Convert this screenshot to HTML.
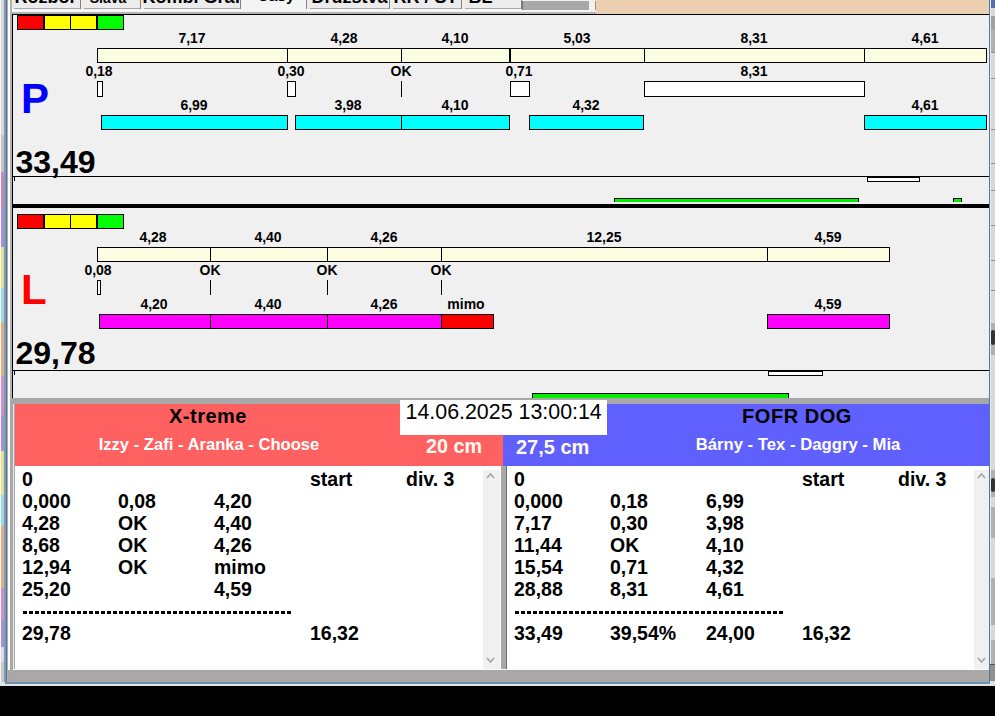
<!DOCTYPE html>
<html><head><meta charset="utf-8"><style>
html,body{margin:0;padding:0;width:995px;height:716px;overflow:hidden;background:#f0f0f0;}
.a{position:absolute;box-sizing:border-box;font-family:"Liberation Sans", sans-serif;}
</style></head><body>
<div class="a" style="left:0px;top:0px;width:995px;height:716px;background:#f0f0f0;"></div>
<div class="a" style="left:1px;top:0px;width:3px;height:135px;background:#d8d8d8;"></div>
<div class="a" style="left:1px;top:135px;width:3px;height:37px;background:#c4c4c4;"></div>
<div class="a" style="left:1px;top:172px;width:3px;height:36px;background:#c888b8;"></div>
<div class="a" style="left:1px;top:208px;width:3px;height:39px;background:#a890d8;"></div>
<div class="a" style="left:1px;top:247px;width:3px;height:41px;background:#e6e090;"></div>
<div class="a" style="left:1px;top:288px;width:3px;height:34px;background:#a0d8e0;"></div>
<div class="a" style="left:1px;top:322px;width:3px;height:54px;background:#e0b080;"></div>
<div class="a" style="left:1px;top:376px;width:3px;height:39px;background:#d090c8;"></div>
<div class="a" style="left:1px;top:415px;width:3px;height:36px;background:#a890d8;"></div>
<div class="a" style="left:1px;top:451px;width:3px;height:44px;background:#e6e090;"></div>
<div class="a" style="left:1px;top:495px;width:3px;height:31px;background:#a0d8e0;"></div>
<div class="a" style="left:1px;top:526px;width:3px;height:62px;background:#e0b080;"></div>
<div class="a" style="left:1px;top:588px;width:3px;height:33px;background:#d090c8;"></div>
<div class="a" style="left:1px;top:621px;width:3px;height:26px;background:#a890d8;"></div>
<div class="a" style="left:1px;top:647px;width:3px;height:15px;background:#e0d8e8;"></div>
<div class="a" style="left:1px;top:662px;width:3px;height:24px;background:#c8c8c8;"></div>
<div class="a" style="left:0px;top:0px;width:1px;height:686px;background:#f4f8f8;"></div>
<div class="a" style="left:4px;top:0px;width:2px;height:686px;background:#7a9cb8;"></div>
<div class="a" style="left:6px;top:0px;width:1px;height:686px;background:#607080;"></div>
<div class="a" style="left:7px;top:0px;width:1px;height:686px;background:#b0b0b0;"></div>
<div class="a" style="left:8px;top:0px;width:2px;height:686px;background:#ffffff;"></div>
<div class="a" style="left:10px;top:0px;width:2px;height:686px;background:#b0b4b8;"></div>
<div class="a" style="left:12px;top:0px;width:977px;height:14px;background:#f0f0f0;"></div>
<div class="a" style="left:12px;top:0px;width:69px;height:9px;background:#ececec;"></div>
<div class="a" style="left:14px;top:8px;width:66px;height:1px;background:#a8a8a8;"></div>
<div class="a" style="left:80px;top:0px;width:1px;height:9px;background:#808080;"></div>
<div class="a" style="left:-154.5px;width:400px;text-align:center;top:-11.74px;font-size:18px;line-height:18px;font-weight:bold;color:#000;white-space:pre;">Rozbor</div>
<div class="a" style="left:82px;top:0px;width:59px;height:9px;background:#ececec;"></div>
<div class="a" style="left:84px;top:8px;width:56px;height:1px;background:#a8a8a8;"></div>
<div class="a" style="left:140px;top:0px;width:1px;height:9px;background:#808080;"></div>
<div class="a" style="left:-92px;width:400px;text-align:center;top:-9.05px;font-size:14px;line-height:14px;font-weight:bold;color:#000;white-space:pre;">Sláva</div>
<div class="a" style="left:142px;top:0px;width:99px;height:9px;background:#ececec;"></div>
<div class="a" style="left:144px;top:8px;width:96px;height:1px;background:#a8a8a8;"></div>
<div class="a" style="left:240px;top:0px;width:1px;height:9px;background:#808080;"></div>
<div class="a" style="left:-8.5px;width:400px;text-align:center;top:-11.74px;font-size:18px;line-height:18px;font-weight:bold;color:#000;white-space:pre;">Kombi Graf</div>
<div class="a" style="left:241px;top:0px;width:66px;height:12px;background:#f4f4f4;"></div>
<div class="a" style="left:306px;top:0px;width:1px;height:9px;background:#808080;"></div>
<div class="a" style="left:76px;width:400px;text-align:center;top:-11.62px;font-size:15.5px;line-height:15.5px;font-weight:bold;color:#000;white-space:pre;">Časy</div>
<div class="a" style="left:308px;top:0px;width:82px;height:9px;background:#ececec;"></div>
<div class="a" style="left:310px;top:8px;width:79px;height:1px;background:#a8a8a8;"></div>
<div class="a" style="left:389px;top:0px;width:1px;height:9px;background:#808080;"></div>
<div class="a" style="left:149.5px;width:400px;text-align:center;top:-11.74px;font-size:18px;line-height:18px;font-weight:bold;color:#000;white-space:pre;">Družstva</div>
<div class="a" style="left:391px;top:0px;width:71px;height:9px;background:#ececec;"></div>
<div class="a" style="left:393px;top:8px;width:68px;height:1px;background:#a8a8a8;"></div>
<div class="a" style="left:461px;top:0px;width:1px;height:9px;background:#808080;"></div>
<div class="a" style="left:225.5px;width:400px;text-align:center;top:-11.74px;font-size:18px;line-height:18px;font-weight:bold;color:#000;white-space:pre;">RR / ST</div>
<div class="a" style="left:463px;top:0px;width:59px;height:9px;background:#ececec;"></div>
<div class="a" style="left:465px;top:8px;width:56px;height:1px;background:#a8a8a8;"></div>
<div class="a" style="left:521px;top:0px;width:1px;height:9px;background:#808080;"></div>
<div class="a" style="left:280.5px;width:400px;text-align:center;top:-11.74px;font-size:18px;line-height:18px;font-weight:bold;color:#000;white-space:pre;">BL</div>
<div class="a" style="left:12px;top:9px;width:977px;height:3px;background:#f6f6f6;"></div>
<div class="a" style="left:12px;top:12px;width:977px;height:2px;background:#b4b4b4;"></div>
<div class="a" style="left:522px;top:1px;width:67px;height:9px;background:#a8a8a8;"></div>
<div class="a" style="left:522px;top:1px;width:1px;height:9px;background:#707070;"></div>
<div class="a" style="left:589px;top:0px;width:6px;height:12px;background:#f8f0e8;"></div>
<div class="a" style="left:595px;top:1px;width:1px;height:9px;background:#909090;"></div>
<div class="a" style="left:596px;top:0px;width:393px;height:14px;background:#eccfb0;"></div>
<div class="a" style="left:989px;top:0px;width:1px;height:684px;background:#4a78a8;"></div>
<div class="a" style="left:991px;top:0px;width:4px;height:686px;background:#d8d8d8;"></div>
<div class="a" style="left:990px;top:0px;width:1px;height:686px;background:#e8eef4;"></div>
<div class="a" style="left:991px;top:0px;width:4px;height:8px;background:#5070b0;"></div>
<div class="a" style="left:991px;top:16px;width:4px;height:14px;background:#a0a0a0;"></div>
<div class="a" style="left:991px;top:30px;width:4px;height:22px;background:#b0b0b0;"></div>
<div class="a" style="left:991px;top:323px;width:4px;height:32px;background:#b0b0b0;"></div>
<div class="a" style="left:991px;top:470px;width:4px;height:27px;background:#b0b0b0;"></div>
<div class="a" style="left:991px;top:507px;width:4px;height:31px;background:#b0b0b0;"></div>
<div class="a" style="left:991px;top:578px;width:4px;height:47px;background:#b0b0b0;"></div>
<div class="a" style="left:991px;top:640px;width:4px;height:24px;background:#b0b0b0;"></div>
<div class="a" style="left:991px;top:52px;width:4px;height:1px;background:#909090;"></div>
<div class="a" style="left:991px;top:78px;width:4px;height:1px;background:#909090;"></div>
<div class="a" style="left:991px;top:129px;width:4px;height:1px;background:#909090;"></div>
<div class="a" style="left:991px;top:163px;width:4px;height:1px;background:#909090;"></div>
<div class="a" style="left:991px;top:190px;width:4px;height:1px;background:#909090;"></div>
<div class="a" style="left:991px;top:225px;width:4px;height:1px;background:#909090;"></div>
<div class="a" style="left:991px;top:260px;width:4px;height:1px;background:#909090;"></div>
<div class="a" style="left:991px;top:290px;width:4px;height:1px;background:#909090;"></div>
<div class="a" style="left:991px;top:330px;width:4px;height:15px;background:#333;border-radius:2px;"></div>
<div class="a" style="left:991px;top:478px;width:4px;height:14px;background:#333;border-radius:2px;"></div>
<div class="a" style="left:12px;top:14px;width:977px;height:1px;background:#000;"></div>
<div class="a" style="left:12px;top:14px;width:1px;height:384px;background:#000;"></div>
<div class="a" style="left:17px;top:15px;width:107px;height:15px;background:#000;"></div>
<div class="a" style="left:18px;top:16px;width:25px;height:13px;background:#ff0000;"></div>
<div class="a" style="left:45px;top:16px;width:25px;height:13px;background:#ffff00;"></div>
<div class="a" style="left:71px;top:16px;width:25px;height:13px;background:#ffff00;"></div>
<div class="a" style="left:98px;top:16px;width:25px;height:13px;background:#00ff00;"></div>
<div class="a" style="left:97px;top:48px;width:890px;height:15px;background:#fdfde2;border:1px solid #000;"></div>
<div class="a" style="left:287px;top:48px;width:1px;height:15px;background:#000;"></div>
<div class="a" style="left:401px;top:48px;width:1px;height:15px;background:#000;"></div>
<div class="a" style="left:644px;top:48px;width:1px;height:15px;background:#000;"></div>
<div class="a" style="left:864px;top:48px;width:1px;height:15px;background:#000;"></div>
<div class="a" style="left:509px;top:48px;width:2px;height:15px;background:#000;"></div>
<div class="a" style="left:-8px;width:400px;text-align:center;top:31.15px;font-size:14px;line-height:14px;font-weight:bold;color:#000;white-space:pre;transform:scaleY(1.08);transform-origin:0 11.85px;">7,17</div>
<div class="a" style="left:144px;width:400px;text-align:center;top:31.15px;font-size:14px;line-height:14px;font-weight:bold;color:#000;white-space:pre;transform:scaleY(1.08);transform-origin:0 11.85px;">4,28</div>
<div class="a" style="left:255px;width:400px;text-align:center;top:31.15px;font-size:14px;line-height:14px;font-weight:bold;color:#000;white-space:pre;transform:scaleY(1.08);transform-origin:0 11.85px;">4,10</div>
<div class="a" style="left:377px;width:400px;text-align:center;top:31.15px;font-size:14px;line-height:14px;font-weight:bold;color:#000;white-space:pre;transform:scaleY(1.08);transform-origin:0 11.85px;">5,03</div>
<div class="a" style="left:554px;width:400px;text-align:center;top:31.15px;font-size:14px;line-height:14px;font-weight:bold;color:#000;white-space:pre;transform:scaleY(1.08);transform-origin:0 11.85px;">8,31</div>
<div class="a" style="left:725px;width:400px;text-align:center;top:31.15px;font-size:14px;line-height:14px;font-weight:bold;color:#000;white-space:pre;transform:scaleY(1.08);transform-origin:0 11.85px;">4,61</div>
<div class="a" style="left:-101px;width:400px;text-align:center;top:64.15px;font-size:14px;line-height:14px;font-weight:bold;color:#000;white-space:pre;transform:scaleY(1.08);transform-origin:0 11.85px;">0,18</div>
<div class="a" style="left:91px;width:400px;text-align:center;top:64.15px;font-size:14px;line-height:14px;font-weight:bold;color:#000;white-space:pre;transform:scaleY(1.08);transform-origin:0 11.85px;">0,30</div>
<div class="a" style="left:201px;width:400px;text-align:center;top:64.15px;font-size:14px;line-height:14px;font-weight:bold;color:#000;white-space:pre;transform:scaleY(1.08);transform-origin:0 11.85px;">OK</div>
<div class="a" style="left:319px;width:400px;text-align:center;top:64.15px;font-size:14px;line-height:14px;font-weight:bold;color:#000;white-space:pre;transform:scaleY(1.08);transform-origin:0 11.85px;">0,71</div>
<div class="a" style="left:554px;width:400px;text-align:center;top:64.15px;font-size:14px;line-height:14px;font-weight:bold;color:#000;white-space:pre;transform:scaleY(1.08);transform-origin:0 11.85px;">8,31</div>
<div class="a" style="left:97px;top:81px;width:6px;height:16px;background:#fff;border:1px solid #000;"></div>
<div class="a" style="left:287px;top:81px;width:9px;height:16px;background:#fff;border:1px solid #000;"></div>
<div class="a" style="left:510px;top:81px;width:20px;height:16px;background:#fff;border:1px solid #000;"></div>
<div class="a" style="left:644px;top:81px;width:221px;height:16px;background:#fff;border:1px solid #000;"></div>
<div class="a" style="left:401px;top:81px;width:1px;height:16px;background:#000;"></div>
<div class="a" style="left:101px;top:115px;width:187px;height:15px;background:#00ffff;border:1px solid #000;"></div>
<div class="a" style="left:295px;top:115px;width:215px;height:15px;background:#00ffff;border:1px solid #000;"></div>
<div class="a" style="left:529px;top:115px;width:115px;height:15px;background:#00ffff;border:1px solid #000;"></div>
<div class="a" style="left:864px;top:115px;width:123px;height:15px;background:#00ffff;border:1px solid #000;"></div>
<div class="a" style="left:401px;top:115px;width:1px;height:15px;background:#000;"></div>
<div class="a" style="left:-6px;width:400px;text-align:center;top:98.15px;font-size:14px;line-height:14px;font-weight:bold;color:#000;white-space:pre;transform:scaleY(1.08);transform-origin:0 11.85px;">6,99</div>
<div class="a" style="left:148px;width:400px;text-align:center;top:98.15px;font-size:14px;line-height:14px;font-weight:bold;color:#000;white-space:pre;transform:scaleY(1.08);transform-origin:0 11.85px;">3,98</div>
<div class="a" style="left:255px;width:400px;text-align:center;top:98.15px;font-size:14px;line-height:14px;font-weight:bold;color:#000;white-space:pre;transform:scaleY(1.08);transform-origin:0 11.85px;">4,10</div>
<div class="a" style="left:386px;width:400px;text-align:center;top:98.15px;font-size:14px;line-height:14px;font-weight:bold;color:#000;white-space:pre;transform:scaleY(1.08);transform-origin:0 11.85px;">4,32</div>
<div class="a" style="left:725px;width:400px;text-align:center;top:98.15px;font-size:14px;line-height:14px;font-weight:bold;color:#000;white-space:pre;transform:scaleY(1.08);transform-origin:0 11.85px;">4,61</div>
<div class="a" style="left:21px;top:78.45px;font-size:42px;line-height:42px;font-weight:bold;color:#0000ff;white-space:pre;">P</div>
<div class="a" style="left:15.5px;top:146.11px;font-size:32px;line-height:32px;font-weight:bold;color:#000;white-space:pre;">33,49</div>
<div class="a" style="left:13px;top:176px;width:976px;height:1px;background:#000;"></div>
<div class="a" style="left:14px;top:177px;width:1px;height:4px;background:#000;"></div>
<div class="a" style="left:867px;top:176px;width:53px;height:6px;background:#fff;border:1px solid #000;border-top-width:2px;"></div>
<div class="a" style="left:614px;top:198px;width:245px;height:4px;background:#00f000;border:1px solid #000;border-bottom:0;"></div>
<div class="a" style="left:953px;top:198px;width:9px;height:4px;background:#00f000;border:1px solid #000;border-bottom:0;"></div>
<div class="a" style="left:13px;top:204px;width:976px;height:4px;background:#000;"></div>
<div class="a" style="left:17px;top:214px;width:107px;height:15px;background:#000;"></div>
<div class="a" style="left:18px;top:215px;width:25px;height:13px;background:#ff0000;"></div>
<div class="a" style="left:45px;top:215px;width:25px;height:13px;background:#ffff00;"></div>
<div class="a" style="left:71px;top:215px;width:25px;height:13px;background:#ffff00;"></div>
<div class="a" style="left:98px;top:215px;width:25px;height:13px;background:#00ff00;"></div>
<div class="a" style="left:97px;top:247px;width:793px;height:15px;background:#fdfde2;border:1px solid #000;"></div>
<div class="a" style="left:210px;top:247px;width:1px;height:15px;background:#000;"></div>
<div class="a" style="left:327px;top:247px;width:1px;height:15px;background:#000;"></div>
<div class="a" style="left:441px;top:247px;width:1px;height:15px;background:#000;"></div>
<div class="a" style="left:767px;top:247px;width:1px;height:15px;background:#000;"></div>
<div class="a" style="left:-47px;width:400px;text-align:center;top:230.15px;font-size:14px;line-height:14px;font-weight:bold;color:#000;white-space:pre;transform:scaleY(1.08);transform-origin:0 11.85px;">4,28</div>
<div class="a" style="left:68px;width:400px;text-align:center;top:230.15px;font-size:14px;line-height:14px;font-weight:bold;color:#000;white-space:pre;transform:scaleY(1.08);transform-origin:0 11.85px;">4,40</div>
<div class="a" style="left:184px;width:400px;text-align:center;top:230.15px;font-size:14px;line-height:14px;font-weight:bold;color:#000;white-space:pre;transform:scaleY(1.08);transform-origin:0 11.85px;">4,26</div>
<div class="a" style="left:404px;width:400px;text-align:center;top:230.15px;font-size:14px;line-height:14px;font-weight:bold;color:#000;white-space:pre;transform:scaleY(1.08);transform-origin:0 11.85px;">12,25</div>
<div class="a" style="left:628px;width:400px;text-align:center;top:230.15px;font-size:14px;line-height:14px;font-weight:bold;color:#000;white-space:pre;transform:scaleY(1.08);transform-origin:0 11.85px;">4,59</div>
<div class="a" style="left:-102px;width:400px;text-align:center;top:263.15px;font-size:14px;line-height:14px;font-weight:bold;color:#000;white-space:pre;transform:scaleY(1.08);transform-origin:0 11.85px;">0,08</div>
<div class="a" style="left:10px;width:400px;text-align:center;top:263.15px;font-size:14px;line-height:14px;font-weight:bold;color:#000;white-space:pre;transform:scaleY(1.08);transform-origin:0 11.85px;">OK</div>
<div class="a" style="left:127px;width:400px;text-align:center;top:263.15px;font-size:14px;line-height:14px;font-weight:bold;color:#000;white-space:pre;transform:scaleY(1.08);transform-origin:0 11.85px;">OK</div>
<div class="a" style="left:241px;width:400px;text-align:center;top:263.15px;font-size:14px;line-height:14px;font-weight:bold;color:#000;white-space:pre;transform:scaleY(1.08);transform-origin:0 11.85px;">OK</div>
<div class="a" style="left:97px;top:280px;width:4px;height:15px;background:#fff;border:1px solid #000;"></div>
<div class="a" style="left:210px;top:280px;width:1px;height:15px;background:#000;"></div>
<div class="a" style="left:327px;top:280px;width:1px;height:15px;background:#000;"></div>
<div class="a" style="left:441px;top:280px;width:1px;height:15px;background:#000;"></div>
<div class="a" style="left:99px;top:314px;width:343px;height:15px;background:#ff00ff;border:1px solid #000;"></div>
<div class="a" style="left:210px;top:314px;width:1px;height:15px;background:#000;"></div>
<div class="a" style="left:327px;top:314px;width:1px;height:15px;background:#000;"></div>
<div class="a" style="left:441px;top:314px;width:53px;height:15px;background:#ff0000;border:1px solid #000;"></div>
<div class="a" style="left:767px;top:314px;width:123px;height:15px;background:#ff00ff;border:1px solid #000;"></div>
<div class="a" style="left:-46px;width:400px;text-align:center;top:297.15px;font-size:14px;line-height:14px;font-weight:bold;color:#000;white-space:pre;transform:scaleY(1.08);transform-origin:0 11.85px;">4,20</div>
<div class="a" style="left:68px;width:400px;text-align:center;top:297.15px;font-size:14px;line-height:14px;font-weight:bold;color:#000;white-space:pre;transform:scaleY(1.08);transform-origin:0 11.85px;">4,40</div>
<div class="a" style="left:184px;width:400px;text-align:center;top:297.15px;font-size:14px;line-height:14px;font-weight:bold;color:#000;white-space:pre;transform:scaleY(1.08);transform-origin:0 11.85px;">4,26</div>
<div class="a" style="left:266px;width:400px;text-align:center;top:297.15px;font-size:14px;line-height:14px;font-weight:bold;color:#000;white-space:pre;transform:scaleY(1.08);transform-origin:0 11.85px;">mimo</div>
<div class="a" style="left:628px;width:400px;text-align:center;top:297.15px;font-size:14px;line-height:14px;font-weight:bold;color:#000;white-space:pre;transform:scaleY(1.08);transform-origin:0 11.85px;">4,59</div>
<div class="a" style="left:21px;top:269.45px;font-size:42px;line-height:42px;font-weight:bold;color:#ff0000;white-space:pre;">L</div>
<div class="a" style="left:15.5px;top:337.11px;font-size:32px;line-height:32px;font-weight:bold;color:#000;white-space:pre;">29,78</div>
<div class="a" style="left:13px;top:370px;width:976px;height:1px;background:#000;"></div>
<div class="a" style="left:14px;top:371px;width:1px;height:4px;background:#000;"></div>
<div class="a" style="left:768px;top:370px;width:55px;height:6px;background:#fff;border:1px solid #000;border-top-width:2px;"></div>
<div class="a" style="left:532px;top:393px;width:257px;height:5px;background:#00f000;border:1px solid #000;border-bottom:0;"></div>
<div class="a" style="left:12px;top:398px;width:977px;height:6px;background:#a8a8a8;"></div>
<div class="a" style="left:10px;top:398px;width:5px;height:272px;background:#a8a8a8;"></div>
<div class="a" style="left:13px;top:404px;width:1px;height:265px;background:#e8e8e8;"></div>
<div class="a" style="left:15px;top:404px;width:488px;height:62px;background:#ff6060;"></div>
<div class="a" style="left:503px;top:404px;width:486px;height:62px;background:#6060ff;"></div>
<div class="a" style="left:8px;width:400px;text-align:center;top:406.07px;font-size:20px;line-height:20px;font-weight:bold;color:#000;white-space:pre;letter-spacing:0.5px;">X-treme</div>
<div class="a" style="left:9px;width:400px;text-align:center;top:436.70px;font-size:16.6px;line-height:16.6px;font-weight:bold;color:#fff;white-space:pre;">Izzy - Zafi - Aranka - Choose</div>
<div class="a" style="left:82px;width:400px;text-align:right;top:437.24px;font-size:19.8px;line-height:19.8px;font-weight:bold;color:#fffaf4;white-space:pre;">20 cm</div>
<div class="a" style="left:516px;top:437.07px;font-size:20px;line-height:20px;font-weight:bold;color:#fffaf4;white-space:pre;">27,5 cm</div>
<div class="a" style="left:597px;width:400px;text-align:center;top:406.07px;font-size:20px;line-height:20px;font-weight:bold;color:#000;white-space:pre;letter-spacing:0.55px;">FOFR DOG</div>
<div class="a" style="left:598px;width:400px;text-align:center;top:436.61px;font-size:16.7px;line-height:16.7px;font-weight:bold;color:#fff;white-space:pre;">Bárny - Tex - Daggry - Mia</div>
<div class="a" style="left:400px;top:400px;width:207px;height:35px;background:#fff;"></div>
<div class="a" style="left:405.5px;top:401.88px;font-size:21.4px;line-height:21.4px;font-weight:normal;color:#000;white-space:pre;">14.06.2025 13:00:14</div>
<div class="a" style="left:15px;top:466px;width:486px;height:203px;background:#fff;"></div>
<div class="a" style="left:483px;top:470px;width:17px;height:199px;background:#f0f0f0;"></div>
<div class="a" style="left:501px;top:466px;width:5px;height:204px;background:#a8a8a8;"></div>
<div class="a" style="left:506px;top:466px;width:1px;height:204px;background:#707070;"></div>
<div class="a" style="left:507px;top:466px;width:482px;height:203px;background:#fff;"></div>
<div class="a" style="left:974px;top:470px;width:15px;height:199px;background:#f0f0f0;"></div>
<div class="a" style="left:13px;top:669px;width:976px;height:1px;background:#fafafa;"></div>
<div class="a" style="left:8px;top:670px;width:981px;height:12px;background:#a8a8a8;"></div>
<div class="a" style="left:10px;top:675px;width:979px;height:1px;background:#b8a898;"></div>
<div class="a" style="left:0px;top:682px;width:995px;height:4px;background:#e0e4e8;"></div>
<div class="a" style="left:5px;top:682px;width:985px;height:2px;background:#7090b0;"></div>
<div class="a" style="left:990px;top:664px;width:5px;height:17px;background:#909090;"></div>
<div class="a" style="left:990px;top:664px;width:5px;height:1px;background:#505050;"></div>
<div class="a" style="left:0px;top:686px;width:995px;height:30px;background:#000;"></div>
<div class="a" style="left:22px;top:470.49px;font-size:19.5px;line-height:19.5px;font-weight:bold;color:#000;white-space:pre;">0</div>
<div class="a" style="left:310px;top:470.49px;font-size:19.5px;line-height:19.5px;font-weight:bold;color:#000;white-space:pre;">start</div>
<div class="a" style="left:406px;top:470.49px;font-size:19.5px;line-height:19.5px;font-weight:bold;color:#000;white-space:pre;">div. 3</div>
<div class="a" style="left:22px;top:492.49px;font-size:19.5px;line-height:19.5px;font-weight:bold;color:#000;white-space:pre;">0,000</div>
<div class="a" style="left:118px;top:492.49px;font-size:19.5px;line-height:19.5px;font-weight:bold;color:#000;white-space:pre;">0,08</div>
<div class="a" style="left:214px;top:492.49px;font-size:19.5px;line-height:19.5px;font-weight:bold;color:#000;white-space:pre;">4,20</div>
<div class="a" style="left:22px;top:514.49px;font-size:19.5px;line-height:19.5px;font-weight:bold;color:#000;white-space:pre;">4,28</div>
<div class="a" style="left:118px;top:514.49px;font-size:19.5px;line-height:19.5px;font-weight:bold;color:#000;white-space:pre;">OK</div>
<div class="a" style="left:214px;top:514.49px;font-size:19.5px;line-height:19.5px;font-weight:bold;color:#000;white-space:pre;">4,40</div>
<div class="a" style="left:22px;top:536.49px;font-size:19.5px;line-height:19.5px;font-weight:bold;color:#000;white-space:pre;">8,68</div>
<div class="a" style="left:118px;top:536.49px;font-size:19.5px;line-height:19.5px;font-weight:bold;color:#000;white-space:pre;">OK</div>
<div class="a" style="left:214px;top:536.49px;font-size:19.5px;line-height:19.5px;font-weight:bold;color:#000;white-space:pre;">4,26</div>
<div class="a" style="left:22px;top:558.49px;font-size:19.5px;line-height:19.5px;font-weight:bold;color:#000;white-space:pre;">12,94</div>
<div class="a" style="left:118px;top:558.49px;font-size:19.5px;line-height:19.5px;font-weight:bold;color:#000;white-space:pre;">OK</div>
<div class="a" style="left:214px;top:558.49px;font-size:19.5px;line-height:19.5px;font-weight:bold;color:#000;white-space:pre;">mimo</div>
<div class="a" style="left:22px;top:580.49px;font-size:19.5px;line-height:19.5px;font-weight:bold;color:#000;white-space:pre;">25,20</div>
<div class="a" style="left:214px;top:580.49px;font-size:19.5px;line-height:19.5px;font-weight:bold;color:#000;white-space:pre;">4,59</div>
<div class="a" style="left:22px;top:624.49px;font-size:19.5px;line-height:19.5px;font-weight:bold;color:#000;white-space:pre;">29,78</div>
<div class="a" style="left:310px;top:624.49px;font-size:19.5px;line-height:19.5px;font-weight:bold;color:#000;white-space:pre;">16,32</div>
<div class="a" style="left:23px;top:611px;width:269px;height:3px;background:repeating-linear-gradient(90deg,#000 0 4.5px,transparent 4.5px 6px);"></div>
<div class="a" style="left:515px;top:611px;width:269px;height:3px;background:repeating-linear-gradient(90deg,#000 0 4.5px,transparent 4.5px 6px);"></div>
<div class="a" style="left:514px;top:470.49px;font-size:19.5px;line-height:19.5px;font-weight:bold;color:#000;white-space:pre;">0</div>
<div class="a" style="left:802px;top:470.49px;font-size:19.5px;line-height:19.5px;font-weight:bold;color:#000;white-space:pre;">start</div>
<div class="a" style="left:898px;top:470.49px;font-size:19.5px;line-height:19.5px;font-weight:bold;color:#000;white-space:pre;">div. 3</div>
<div class="a" style="left:514px;top:492.49px;font-size:19.5px;line-height:19.5px;font-weight:bold;color:#000;white-space:pre;">0,000</div>
<div class="a" style="left:610px;top:492.49px;font-size:19.5px;line-height:19.5px;font-weight:bold;color:#000;white-space:pre;">0,18</div>
<div class="a" style="left:706px;top:492.49px;font-size:19.5px;line-height:19.5px;font-weight:bold;color:#000;white-space:pre;">6,99</div>
<div class="a" style="left:514px;top:514.49px;font-size:19.5px;line-height:19.5px;font-weight:bold;color:#000;white-space:pre;">7,17</div>
<div class="a" style="left:610px;top:514.49px;font-size:19.5px;line-height:19.5px;font-weight:bold;color:#000;white-space:pre;">0,30</div>
<div class="a" style="left:706px;top:514.49px;font-size:19.5px;line-height:19.5px;font-weight:bold;color:#000;white-space:pre;">3,98</div>
<div class="a" style="left:514px;top:536.49px;font-size:19.5px;line-height:19.5px;font-weight:bold;color:#000;white-space:pre;">11,44</div>
<div class="a" style="left:610px;top:536.49px;font-size:19.5px;line-height:19.5px;font-weight:bold;color:#000;white-space:pre;">OK</div>
<div class="a" style="left:706px;top:536.49px;font-size:19.5px;line-height:19.5px;font-weight:bold;color:#000;white-space:pre;">4,10</div>
<div class="a" style="left:514px;top:558.49px;font-size:19.5px;line-height:19.5px;font-weight:bold;color:#000;white-space:pre;">15,54</div>
<div class="a" style="left:610px;top:558.49px;font-size:19.5px;line-height:19.5px;font-weight:bold;color:#000;white-space:pre;">0,71</div>
<div class="a" style="left:706px;top:558.49px;font-size:19.5px;line-height:19.5px;font-weight:bold;color:#000;white-space:pre;">4,32</div>
<div class="a" style="left:514px;top:580.49px;font-size:19.5px;line-height:19.5px;font-weight:bold;color:#000;white-space:pre;">28,88</div>
<div class="a" style="left:610px;top:580.49px;font-size:19.5px;line-height:19.5px;font-weight:bold;color:#000;white-space:pre;">8,31</div>
<div class="a" style="left:706px;top:580.49px;font-size:19.5px;line-height:19.5px;font-weight:bold;color:#000;white-space:pre;">4,61</div>
<div class="a" style="left:514px;top:624.49px;font-size:19.5px;line-height:19.5px;font-weight:bold;color:#000;white-space:pre;">33,49</div>
<div class="a" style="left:610px;top:624.49px;font-size:19.5px;line-height:19.5px;font-weight:bold;color:#000;white-space:pre;">39,54%</div>
<div class="a" style="left:706px;top:624.49px;font-size:19.5px;line-height:19.5px;font-weight:bold;color:#000;white-space:pre;">24,00</div>
<div class="a" style="left:802px;top:624.49px;font-size:19.5px;line-height:19.5px;font-weight:bold;color:#000;white-space:pre;">16,32</div>
<svg class="a" style="left:486.0px;top:472px;width:9px;height:8px;" viewBox="0 0 9 8"><polyline points="1,6 4.5,2 8,6" fill="none" stroke="#a8a8a8" stroke-width="1.8"/></svg>
<svg class="a" style="left:486.0px;top:656px;width:9px;height:8px;" viewBox="0 0 9 8"><polyline points="1,2 4.5,6 8,2" fill="none" stroke="#a8a8a8" stroke-width="1.8"/></svg>
<svg class="a" style="left:976.5px;top:472px;width:9px;height:8px;" viewBox="0 0 9 8"><polyline points="1,6 4.5,2 8,6" fill="none" stroke="#a8a8a8" stroke-width="1.8"/></svg>
<svg class="a" style="left:976.5px;top:656px;width:9px;height:8px;" viewBox="0 0 9 8"><polyline points="1,2 4.5,6 8,2" fill="none" stroke="#a8a8a8" stroke-width="1.8"/></svg>
</body></html>
